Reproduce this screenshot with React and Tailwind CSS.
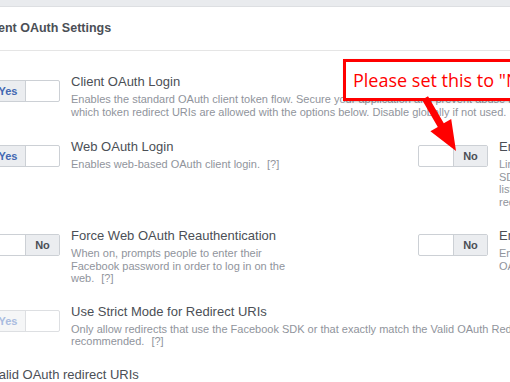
import React from 'react';

function Toggle({ on, disabled }) {
    const border = disabled ? 'border-[#dddfe2]' : 'border-[#ccd0d5]';
    return (
        <div className={`flex shrink-0 w-[70px] h-[22px] border ${border} rounded-[2px] overflow-hidden text-[11px] font-bold leading-[20px] bg-white`}>
            {on ? (
                <>
                    <div className={`w-[35px] border-r ${border} text-center ${disabled ? 'bg-[#f5f6f7] text-[#a9bce0]' : 'bg-[#ebedf0] text-[#4267b2]'}`}>Yes</div>
                    <div className="flex-1"></div>
                </>
            ) : (
                <>
                    <div className={`w-[35px] border-r ${border}`}></div>
                    <div className="flex-1 bg-[#ebedf0] text-[#4b4f56] text-center">No</div>
                </>
            )}
        </div>
    );
}

function Setting({ on, disabled, title, lines, help }) {
    return (
        <div className="flex items-start">
            <div className="mt-[7px]">
                <Toggle on={on} disabled={disabled} />
            </div>
            <div className="ml-[11px] min-w-0">
                <div className="text-[13px] leading-[18px] text-[#4b4f56] whitespace-nowrap">{title}</div>
                <div className="mt-[2px] text-[11px] leading-[12.5px] text-[#90949c]">
                    {lines.map((l, i) => (
                        <div key={i} className="whitespace-nowrap">
                            {l}
                            {help && i === lines.length - 1 && <span className="ml-[7px]">[?]</span>}
                        </div>
                    ))}
                </div>
            </div>
        </div>
    );
}

export default function App() {
    return (
        <div className="relative w-[510px] h-[382px] overflow-hidden bg-white font-['Liberation_Sans',Arial,sans-serif]">
            <div className="h-[7px] bg-[#e9ebee] border-b border-[#dddfe2]"></div>

            {/* Card header */}
            <div className="h-[44px] -ml-[18px] flex items-center border-b border-[#e5e5e5]">
                <span className="text-[12.5px] font-bold text-[#4b4f56]">Client OAuth Settings</span>
            </div>

            <div className="-ml-[10px] pt-[22px] flex flex-col">
                <Setting
                    on
                    title="Client OAuth Login"
                    lines={[
                        'Enables the standard OAuth client token flow. Secure your application and prevent abuse by locking down',
                        'which token redirect URIs are allowed with the options below. Disable globally if not used.',
                    ]}
                />

                <div className="grid grid-cols-[428px_1fr] mt-[20px]">
                    <Setting on title="Web OAuth Login" lines={['Enables web-based OAuth client login.']} help />
                    <Setting
                        title="Enforce HTTPS"
                        lines={[
                            'Limit redirect URIs of the Facebook',
                            'SDK and OAuth clients to HTTPS. This',
                            'list is checked on each login',
                            'request.',
                        ]}
                        help
                    />
                </div>

                <div className="grid grid-cols-[428px_1fr] mt-[19px]">
                    <Setting
                        title="Force Web OAuth Reauthentication"
                        lines={[
                            'When on, prompts people to enter their',
                            'Facebook password in order to log in on the',
                            'web.',
                        ]}
                        help
                    />
                    <Setting
                        title="Embedded Browser OAuth Login"
                        lines={['Enables browser control redirect uri for', 'OAuth client login.']}
                        help
                    />
                </div>

                <div className="mt-[18px]">
                    <Setting
                        on
                        disabled
                        title="Use Strict Mode for Redirect URIs"
                        lines={[
                            'Only allow redirects that use the Facebook SDK or that exactly match the Valid OAuth Redirect URIs. Strongly',
                            'recommended.',
                        ]}
                        help
                    />
                </div>

                <div className="mt-[18px] ml-px text-[13px] leading-[18px] text-[#4b4f56] whitespace-nowrap">Valid OAuth redirect URIs</div>
            </div>

            {/* Annotation callout */}
            <div className="absolute left-[343px] top-[59px] w-[200px] h-[42px] border-[3px] border-[#ff0000] bg-white shadow-[1px_1px_2px_rgba(0,0,0,0.25)] flex items-center pl-[7px]">
                <span className="text-[18px] leading-[18px] text-[#ff0000] whitespace-nowrap font-['Open_Sans',sans-serif]">Please set this to "No"</span>
            </div>
            <svg className="absolute left-[410px] top-[90px]" width="55" height="65" viewBox="410 90 55 65">
                <polygon
                    points="422,99.8 428,96.2 443.8,123.3 451.2,119 456,151 430.4,131.2 437.8,126.9"
                    fill="#ff0000"
                />
            </svg>
        </div>
    );
}
